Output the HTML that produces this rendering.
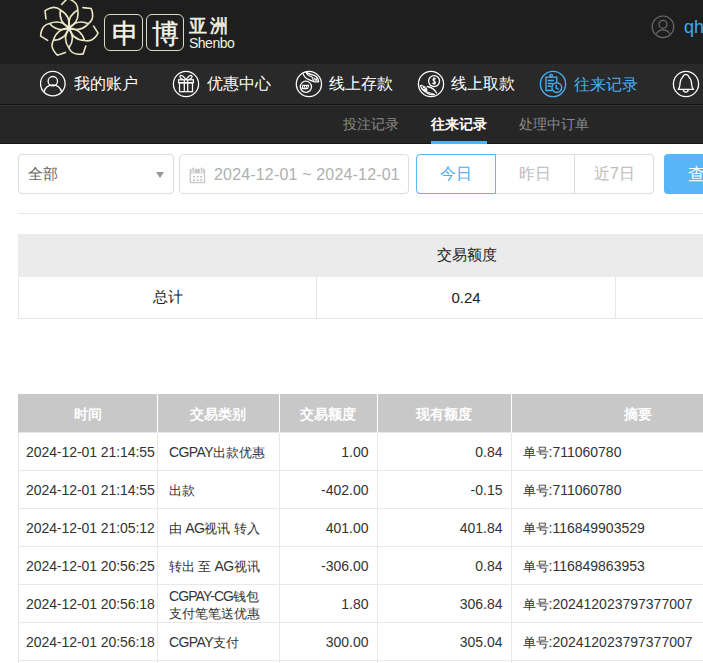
<!DOCTYPE html>
<html><head><meta charset="utf-8">
<style>
*{margin:0;padding:0;box-sizing:border-box}
html,body{width:703px;height:663px;overflow:hidden;background:#fff;font-family:"Liberation Sans",sans-serif}
.abs{position:absolute}
#hdr{position:absolute;left:0;top:0;width:703px;height:64px;background:#1e1e1e}
#nav{position:absolute;left:0;top:64px;width:703px;height:41px;background:#292929;border-bottom:1px solid #121212}
#sub{position:absolute;left:0;top:105px;width:703px;height:39px;background:#262626;border-top:1px solid #333;border-bottom:1px solid #161616}
.ico{position:absolute;top:70px}
.navt{position:absolute;top:64px;height:40px;line-height:40px;color:#fff;font-size:16px;white-space:nowrap}
.subi{position:absolute;top:-1px;height:38px;line-height:38px;font-size:14px;color:#8a8a8a;white-space:nowrap}
.sel{position:absolute;border:1px solid #ddd;border-radius:4px;background:#fff}
.t1{position:absolute;left:18px;top:234px;border-collapse:collapse;table-layout:fixed;width:896px;font-size:15px;color:#222}
.t1 td{border:1px solid #e6e6e6;text-align:center;height:42px;padding:0}
.t1 .h td{background:#ebebeb;border-color:#ebebeb}
.t2{position:absolute;left:18px;top:394px;border-collapse:collapse;table-layout:fixed;width:746px;font-size:14px;color:#333}
.t2 th{background:#c8c8c8;color:#fff;font-weight:bold;height:38px;border-left:1px solid #fff;font-size:14px;padding:4px 0 0 0}
.t2 th:first-child{border-left:1px solid #c8c8c8}
.t2 td{border:1px solid #e8e8e8;height:38px;padding:2px 8px 0 10px;white-space:nowrap;line-height:17px}
.t2 td:first-child{padding-left:7px;letter-spacing:-0.07px}
.t2 td:nth-child(2){padding-left:11px;letter-spacing:-0.6px}
.t2 td:nth-child(2) .c{letter-spacing:0}
.t2 td:nth-child(5){padding-left:11px}
.t2 td.r{text-align:right}
.t2 .c{font-size:13px}
</style></head><body>
<div id="hdr">
  <svg class="abs" style="left:34px;top:0" width="70" height="60" viewBox="-35 -28 70 60">
    <defs><path id="arm" d="M0,0 Q7,-10 0,-20 Q-7,-10 0,0 M0,-20 C-1.5,-23.2 -4.5,-25.6 -8,-26 C-10.5,-26.3 -12.8,-26.3 -14.3,-25.8 L-16.9,-18"/></defs>
    <g fill="none" stroke="#ebe9c4" stroke-width="1.6" stroke-linecap="round"><use href="#arm" transform="rotate(26.00)"/><use href="#arm" transform="rotate(77.43)"/><use href="#arm" transform="rotate(128.86)"/><use href="#arm" transform="rotate(180.29)"/><use href="#arm" transform="rotate(231.71)"/><use href="#arm" transform="rotate(283.14)"/><use href="#arm" transform="rotate(334.57)"/></g>
    <circle cx="0" cy="0" r="2.2" fill="#eee"/>
  </svg>
  <div class="abs" style="left:104px;top:14px;width:39px;height:37px;border:1.5px solid #dcdac6;border-radius:6px;color:#f6f5ea;font-size:27px;line-height:38px;text-align:center;padding-left:3px;-webkit-text-stroke:0.35px #f6f5ea">申</div>
  <div class="abs" style="left:146px;top:14px;width:38px;height:37px;border:1.5px solid #dcdac6;border-radius:6px;color:#f6f5ea;font-size:27px;line-height:38px;text-align:center;padding-left:1px;-webkit-text-stroke:0.35px #f6f5ea">博</div>
  <div class="abs" style="left:189px;top:15px;color:#f2f0e0;font-size:18px;line-height:22px;letter-spacing:3px;-webkit-text-stroke:0.6px #f2f0e0">亚洲</div>
  <div class="abs" style="left:189px;top:35px;color:#f2f0e0;font-size:14px;line-height:16px;letter-spacing:-0.5px">Shenbo</div>
  <svg class="abs" style="left:651px;top:15px" width="24" height="24" viewBox="0 0 24 24">
    <g fill="none" stroke="#6a6a6a" stroke-width="1.2">
      <circle cx="12" cy="11.8" r="10.8"/>
      <circle cx="12" cy="9.3" r="4"/>
      <path d="M5.2,18.8 A7.8,7.8 0 0 1 18.8,18.8"/>
    </g>
  </svg>
  <div class="abs" style="left:684px;top:15px;color:#3fa9f5;font-size:18px;line-height:24px">qh</div>
</div>
<div id="nav"></div>
<!-- nav icons -->
<svg class="ico" style="left:40px" width="27" height="28" viewBox="0 0 27 28">
  <g fill="none" stroke="#fff" stroke-width="1.3">
    <circle cx="12.8" cy="13.6" r="12.3"/>
    <circle cx="12.8" cy="11.2" r="4.7"/>
    <path d="M4,21.9 A9,9 0 0 1 21.6,21.9"/>
  </g>
</svg>
<div class="navt" style="left:74px">我的账户</div>
<svg class="ico" style="left:172px" width="28" height="28" viewBox="0 0 28 28">
  <g fill="none" stroke="#fff" stroke-width="1.25">
    <circle cx="14" cy="14" r="12.6"/>
    <rect x="6.6" y="9.8" width="14.8" height="3"/>
    <rect x="7.5" y="12.8" width="13" height="8.9"/>
    <path d="M12.3,9.8 V21.7 M15.7,9.8 V21.7"/>
    <path d="M14,9.6 C12,7 9.8,4.6 8.4,5.6 C7.3,6.5 8.3,8.6 11,9.6 M14,9.6 C16,7 18.2,4.6 19.6,5.6 C20.7,6.5 19.7,8.6 17,9.6"/>
  </g>
</svg>
<div class="navt" style="left:207px">优惠中心</div>
<svg class="ico" style="left:295px" width="28" height="28" viewBox="0 0 28 28">
  <g fill="none" stroke="#fff" stroke-width="1.3" stroke-linecap="round" stroke-linejoin="round">
    <circle cx="13.9" cy="14" r="12.6"/>
    <circle cx="10.9" cy="16.8" r="5.6"/>
    <path d="M7.8,15.3 H13.6 L12.6,18.6 H7 Z" stroke-width="1.2"/>
    <path d="M8.8,18.4 L9.9,15.6 M10.8,18.4 L11.8,15.6" stroke-width="1"/>
    <path d="M8.1,3.6 C9,6.5 11,8.6 14,9.6 C16.5,10.5 18.5,11.8 20.7,11.9 L23.4,11.8"/>
    <path d="M11.3,2.3 C13.5,3.4 16,4.6 18.4,5.2 C21,6 23.3,8 23.6,11.6"/>
    <path d="M11.3,2.6 C11.8,4 13.5,5.6 16,6.5 C17,6.9 17.5,7.5 17.8,7.9"/>
    <path d="M17.4,8.8 L18.6,10.5 M19.2,8.2 L20.4,10.2 M21,8.6 L21.9,10.4" stroke-width="1.1"/>
  </g>
</svg>
<div class="navt" style="left:329px">线上存款</div>
<svg class="ico" style="left:417px" width="28" height="28" viewBox="0 0 28 28">
  <g fill="none" stroke="#fff" stroke-width="1.3" stroke-linecap="round" stroke-linejoin="round">
    <circle cx="14" cy="14" r="12.6"/>
    <circle cx="17.1" cy="11.1" r="5.5"/>
    <path d="M18.4,8.9 C17.9,8.3 16,8.3 16,9.7 C16,11 18.4,10.8 18.4,12.4 C18.4,13.9 16.2,13.9 15.7,13.2 M17.1,7.6 V14.6" stroke-width="1.1"/>
    <path d="M3.3,15.6 C4.5,19 8,22.5 12.8,24.3 C14.5,24.8 16,24.8 17.5,24.6"/>
    <path d="M4.6,18.4 C7,20.6 10,22.5 13,23 C15,23.3 16.5,23.8 17.5,24.6" stroke-width="1.1"/>
    <path d="M10.4,16.5 C13.5,17 17,18.5 19.6,23"/>
    <path d="M3.5,15.4 C4.6,14.9 5.6,15.5 6.5,16.5 L9.6,19.4 C10.3,20.1 9.9,20.9 8.9,20.6 L6.6,19.3 M6.3,17.6 L7.9,16.7 M8,18.9 L9.6,18" stroke-width="1.1"/>
  </g>
</svg>
<div class="navt" style="left:451px">线上取款</div>
<svg class="ico" style="left:539px" width="28" height="28" viewBox="0 0 28 28">
  <g fill="none" stroke="#4aaef0" stroke-width="1.35">
    <circle cx="14" cy="14" r="12.6"/>
    <path d="M13.2,20.5 H7 V7.1 H17.8 V12.8"/>
    <circle cx="12.1" cy="5.7" r="1.3"/>
    <path d="M8.7,10.5 H14.9 M8.7,13.4 H13.8 M8.7,16.2 H12.1" stroke-width="1.5"/>
    <circle cx="17.8" cy="17.6" r="4.9"/>
    <path d="M17.2,14.8 V18 L19.7,19.4"/>
  </g>
</svg>
<div class="navt" style="left:574px;color:#4aaef0;font-size:16.3px">往来记录</div>
<svg class="ico" style="left:672px" width="28" height="28" viewBox="0 0 28 28">
  <g fill="none" stroke="#fff" stroke-width="1.3">
    <circle cx="14" cy="14" r="12.6"/>
    <path d="M6.3,19.4 H21.5 C20.3,18.2 19.9,16.8 19.7,15 C19.4,11 19.3,8.8 17.2,7.6 C16.4,5.2 15.3,4.4 13.8,4.4 C12.3,4.4 11.2,5.2 10.4,7.6 C8.3,8.8 8.2,11 7.9,15 C7.7,16.8 7.3,18.2 6.3,19.4 Z" stroke-linejoin="round"/>
    <path d="M11.3,19.6 A2.5,2.5 0 0 0 16.3,19.6"/>
  </g>
</svg>
<div id="sub">
  <div class="subi" style="left:343px">投注记录</div>
  <div class="subi" style="left:431px;color:#fff;font-weight:bold">往来记录<div class="abs" style="left:0;right:0;bottom:-1px;height:3px;background:#4db3f5"></div></div>
  <div class="subi" style="left:519px">处理中订单</div>
</div>
<!-- filter row -->
<div class="sel" style="left:18px;top:154px;width:156px;height:40px">
  <div class="abs" style="left:9px;top:0;line-height:38px;font-size:15px;color:#666">全部</div>
  <div class="abs" style="left:137px;top:17px;width:0;height:0;border-left:4px solid transparent;border-right:4px solid transparent;border-top:6px solid #999"></div>
</div>
<div class="sel" style="left:179px;top:154px;width:230px;height:40px">
  <svg class="abs" style="left:9px;top:12px" width="17" height="17" viewBox="0 0 17 17">
    <rect x="0.6" y="1.8" width="15.6" height="14.5" rx="1.5" fill="#c9c9c9"/>
    <rect x="2" y="6.4" width="12.8" height="8.5" fill="#fff"/>
    <g fill="#c9c9c9"><rect x="3.9" y="8.9" width="2.1" height="1.7"/><rect x="7.6" y="8.9" width="2.1" height="1.7"/><rect x="10.9" y="8.9" width="2.1" height="1.7"/>
    <rect x="3.9" y="12.2" width="2.1" height="1.8"/><rect x="7.6" y="12.2" width="2.1" height="1.8"/><rect x="10.9" y="12.2" width="2.1" height="1.8"/></g>
    <g fill="#fff"><rect x="2.6" y="0" width="3.2" height="5.5"/><rect x="10.9" y="0" width="3.2" height="5.5"/></g>
    <g fill="#c9c9c9"><rect x="3.4" y="0.5" width="1.7" height="4.6" rx="0.8"/><rect x="11.7" y="0.5" width="1.8" height="4.6" rx="0.8"/></g>
  </svg>
  <div class="abs" style="left:34px;top:1px;line-height:38px;font-size:16px;color:#b0b0b0;white-space:nowrap;letter-spacing:0.17px">2024-12-01 ~ 2024-12-01</div>
</div>
<div class="sel" style="left:416px;top:154px;width:238px;height:40px"></div>
<div class="abs" style="left:416px;top:154px;width:80px;height:40px;border:1px solid #5bb8f5;border-radius:4px 0 0 4px;color:#4aaef0;font-size:16px;line-height:38px;text-align:center">今日</div>
<div class="abs" style="left:495px;top:154px;width:80px;height:40px;border-right:1px solid #ddd;color:#bbb;font-size:16px;line-height:40px;text-align:center">昨日</div>
<div class="abs" style="left:575px;top:154px;width:79px;height:40px;color:#bbb;font-size:16px;line-height:40px;text-align:center">近7日</div>
<div class="abs" style="left:664px;top:154px;width:80px;height:40px;background:#57b5f8;border-radius:4px;color:#fff;font-size:16.5px;line-height:40px;padding-left:24px">查询</div>
<div class="abs" style="left:18px;top:213px;width:700px;height:1px;background:#e8e8e8"></div>
<!-- summary table -->
<table class="t1"><colgroup><col style="width:298px"><col style="width:299px"><col style="width:299px"></colgroup>
  <tr class="h"><td colspan="3">交易额度</td></tr>
  <tr><td>总计</td><td>0.24</td><td></td></tr>
</table>
<!-- main table -->
<table class="t2">
  <colgroup><col style="width:139px"><col style="width:121.5px"><col style="width:98px"><col style="width:134px"><col style="width:253.5px"></colgroup>
  <tr><th>时间</th><th>交易类别</th><th>交易额度</th><th>现有额度</th><th>摘要</th></tr>
  <tr><td>2024-12-01 21:14:55</td><td>CGPAY<span class="c">出款优惠</span></td><td class="r">1.00</td><td class="r">0.84</td><td><span class="c">单号</span>:711060780</td></tr>
  <tr><td>2024-12-01 21:14:55</td><td><span class="c">出款</span></td><td class="r">-402.00</td><td class="r">-0.15</td><td><span class="c">单号</span>:711060780</td></tr>
  <tr><td>2024-12-01 21:05:12</td><td><span class="c">由</span> AG<span class="c">视讯</span> <span class="c">转入</span></td><td class="r">401.00</td><td class="r">401.84</td><td><span class="c">单号</span>:116849903529</td></tr>
  <tr><td>2024-12-01 20:56:25</td><td><span class="c">转出</span> <span class="c">至</span> AG<span class="c">视讯</span></td><td class="r">-306.00</td><td class="r">0.84</td><td><span class="c">单号</span>:116849863953</td></tr>
  <tr><td>2024-12-01 20:56:18</td><td style="padding-top:3px;letter-spacing:-0.9px">CGPAY-CG<span class="c">钱包</span><br><span class="c">支付笔笔送优惠</span></td><td class="r">1.80</td><td class="r">306.84</td><td><span class="c">单号</span>:202412023797377007</td></tr>
  <tr><td>2024-12-01 20:56:18</td><td>CGPAY<span class="c">支付</span></td><td class="r">300.00</td><td class="r">305.04</td><td><span class="c">单号</span>:202412023797377007</td></tr>
  <tr><td>2024-12-01 20:56:18</td><td>CGPAY<span class="c">支付</span></td><td class="r">300.00</td><td class="r">305.04</td><td><span class="c">单号</span>:202412023797377007</td></tr>
</table>
</body></html>
